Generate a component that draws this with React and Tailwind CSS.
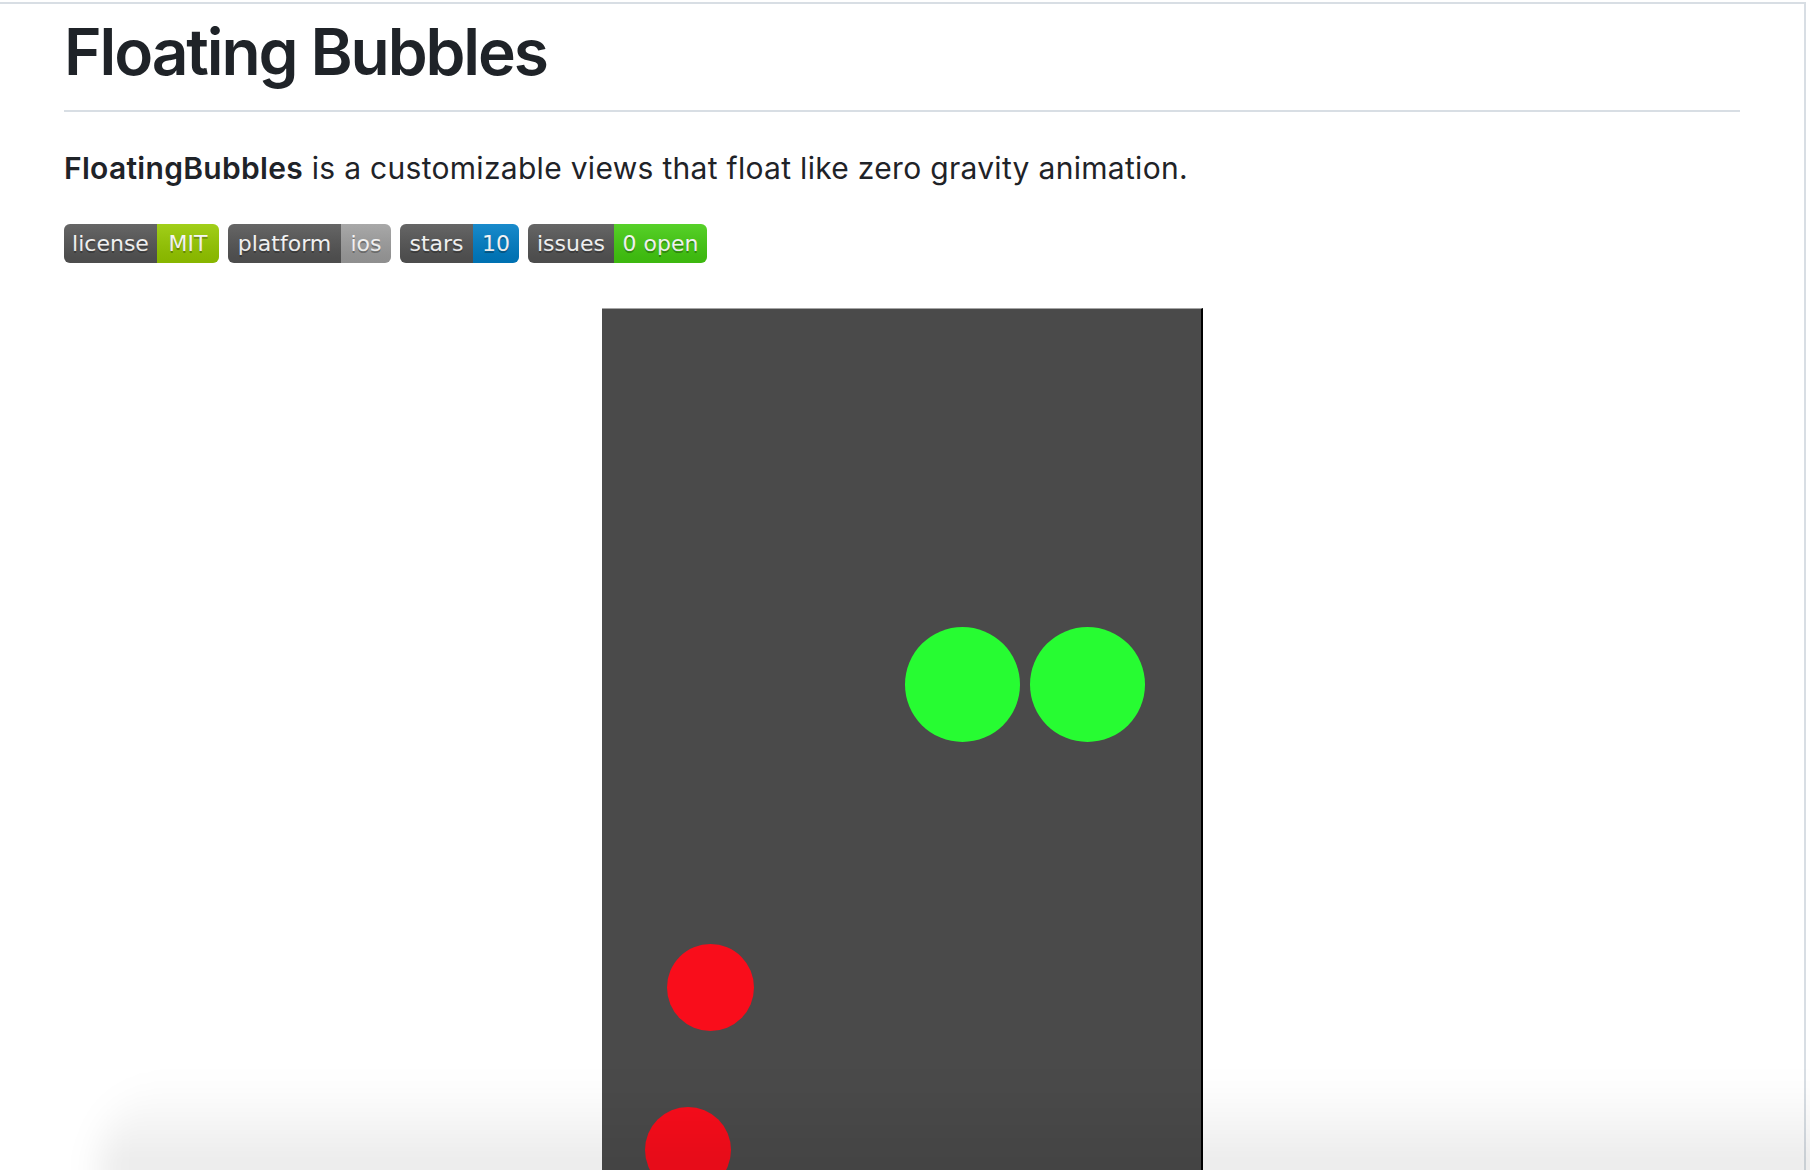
import React from 'react';

const badges = [
  { label: 'license', value: 'MIT', lw: 93, vw: 62, color: 'bg-[#97ca00]' },
  { label: 'platform', value: 'ios', lw: 113, vw: 50, color: 'bg-[#9f9f9f]' },
  { label: 'stars', value: '10', lw: 73, vw: 46, color: 'bg-[#007ec6]' },
  { label: 'issues', value: '0 open', lw: 86, vw: 93, color: 'bg-[#44cc11]' },
];

function Badge({ label, value, lw, vw, color }) {
  return (
    <div className="relative flex h-[39px] overflow-hidden rounded-[6px] text-[22px] leading-none text-white [text-shadow:0_2px_0_rgba(1,1,1,0.3)]" style={{ fontFamily: '"DejaVu Sans", Verdana, sans-serif' }}>
      <span className="flex items-center justify-center bg-[#555555]" style={{ width: lw }}>{label}</span>
      <span className={`flex items-center justify-center ${color}`} style={{ width: vw }}>{value}</span>
      <span className="pointer-events-none absolute inset-0 bg-gradient-to-b from-white/10 to-black/10" />
    </div>
  );
}

function Bubble({ x, y, d, color }) {
  return (
    <div
      className={`absolute rounded-full ${color}`}
      style={{ left: x - d / 2, top: y - d / 2, width: d, height: d }}
    />
  );
}

export default function App() {
  return (
    <div className="relative h-[1170px] w-full overflow-hidden bg-white pt-[2px] pr-[4px]" style={{ fontFamily: 'Inter, "Noto Sans", sans-serif' }}>
      <div className="h-full border-t-2 border-r-2 border-[#d8dee4] px-[64px]">
        <h1 className="mt-[8px] border-b-2 border-[#d8dee4] pb-[18px] text-[64px] font-semibold leading-[80px] tracking-[-2.1px] text-[#1f2328]">
          Floating Bubbles
        </h1>

        <p className="mt-[34px] text-[30px] leading-[44px] tracking-[0.3px] text-[#1f2328]">
          <strong className="font-semibold">FloatingBubbles</strong> is a customizable views that float like zero gravity animation.
        </p>

        <div className="mt-[34px] flex gap-[9px]">
          {badges.map((b) => (
            <Badge key={b.label} {...b} />
          ))}
        </div>

        {/* demo gif frame */}
        <div className="relative mx-auto mt-[45px] h-[900px] w-[601px] border-t border-r-2 border-t-[#a5a5a5] border-r-black bg-[#4a4a4a]">
          <Bubble x={361} y={375} d={115} color="bg-[#27fc32]" />
          <Bubble x={486} y={375} d={115} color="bg-[#27fc32]" />
          <Bubble x={109} y={678} d={87} color="bg-[#f90d1b]" />
          <Bubble x={86} y={841} d={86} color="bg-[#f90d1b]" />
        </div>
      </div>

      {/* window shadow at the bottom */}
      <div className="pointer-events-none absolute -bottom-[20px] left-[100px] -right-[20px] h-[110px] rounded-tl-[80px] bg-gradient-to-b from-transparent to-black/10 blur-[16px]" />
    </div>
  );
}
